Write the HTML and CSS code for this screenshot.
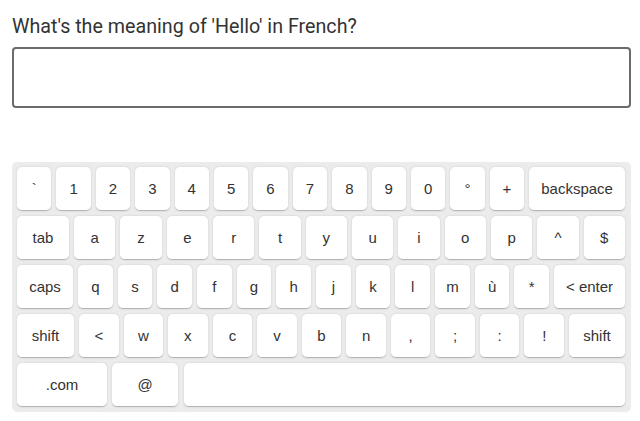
FILE: index.html
```html
<!DOCTYPE html>
<html>
<head>
<meta charset="utf-8">
<link rel="stylesheet" href="styles.css">
</head>
<body>
<div class="page">
  <h1 class="question">What's the meaning of 'Hello' in French?</h1>
  <input class="answer" type="text">
  <div class="keyboard">
    <div class="row">
      <div class="key">`</div><div class="key">1</div><div class="key">2</div><div class="key">3</div><div class="key">4</div><div class="key">5</div><div class="key">6</div><div class="key">7</div><div class="key">8</div><div class="key">9</div><div class="key">0</div><div class="key">°</div><div class="key">+</div><div class="key backspace">backspace</div>
    </div>
    <div class="row">
      <div class="key tab">tab</div><div class="key">a</div><div class="key">z</div><div class="key">e</div><div class="key">r</div><div class="key">t</div><div class="key">y</div><div class="key">u</div><div class="key">i</div><div class="key">o</div><div class="key">p</div><div class="key">^</div><div class="key">$</div>
    </div>
    <div class="row">
      <div class="key caps">caps</div><div class="key">q</div><div class="key">s</div><div class="key">d</div><div class="key">f</div><div class="key">g</div><div class="key">h</div><div class="key">j</div><div class="key">k</div><div class="key">l</div><div class="key">m</div><div class="key">ù</div><div class="key">*</div><div class="key enter">&lt; enter</div>
    </div>
    <div class="row">
      <div class="key shift-l">shift</div><div class="key">&lt;</div><div class="key">w</div><div class="key">x</div><div class="key">c</div><div class="key">v</div><div class="key">b</div><div class="key">n</div><div class="key">,</div><div class="key">;</div><div class="key">:</div><div class="key">!</div><div class="key shift-r">shift</div>
    </div>
    <div class="row">
      <div class="key com">.com</div><div class="key at">@</div><div class="key space"></div>
    </div>
  </div>
</div>
</body>
</html>
```
FILE: styles.css
```css
html, body {
  margin: 0;
  padding: 0;
  background: #ffffff;
}

.page {
  margin-left: 12px;
  width: 619px;
  padding-top: 15px;
}

.question {
  margin: 0;
  font-family: Roboto, "Liberation Sans", sans-serif;
  font-weight: 400;
  font-size: 19.7px;
  line-height: 24px;
  color: #333333;
}

.answer {
  display: block;
  box-sizing: border-box;
  margin: 8px 0 0 0;
  width: 619px;
  height: 61px;
  border: 2px solid #6b6b6b;
  border-radius: 4px;
  background: #ffffff;
  outline: none;
}

.keyboard {
  box-sizing: border-box;
  margin-top: 54px;
  width: 619px;
  padding: 5px 6px 5px 5px;
  background: #ececec;
  border-radius: 5px;
  display: flex;
  flex-direction: column;
  gap: 5px;
  font-family: "Liberation Sans", Arial, sans-serif;
  font-size: 15px;
  color: #333333;
}

.row {
  display: flex;
  gap: 5px;
}

.key {
  box-sizing: border-box;
  flex: 1 1 0;
  height: 44px;
  min-width: 0;
  background: #ffffff;
  border-radius: 5px;
  border-bottom: 1px solid #b5b5b5;
  box-shadow: 0 0 3px -1px rgba(0, 0, 0, 0.3);
  display: flex;
  align-items: center;
  justify-content: center;
}

.backspace { flex: 0 0 96px; }
.tab { flex: 0 0 52px; }
.caps { flex: 0 0 56px; }
.enter { flex: 0 0 71px; }
.shift-l { flex: 0 0 57px; }
.shift-r { flex: 0 0 56px; }
.com { flex: 0 0 90px; }
.at { flex: 0 0 66px; margin-right: 1px; }
.space { flex: 1 1 0; }
```
